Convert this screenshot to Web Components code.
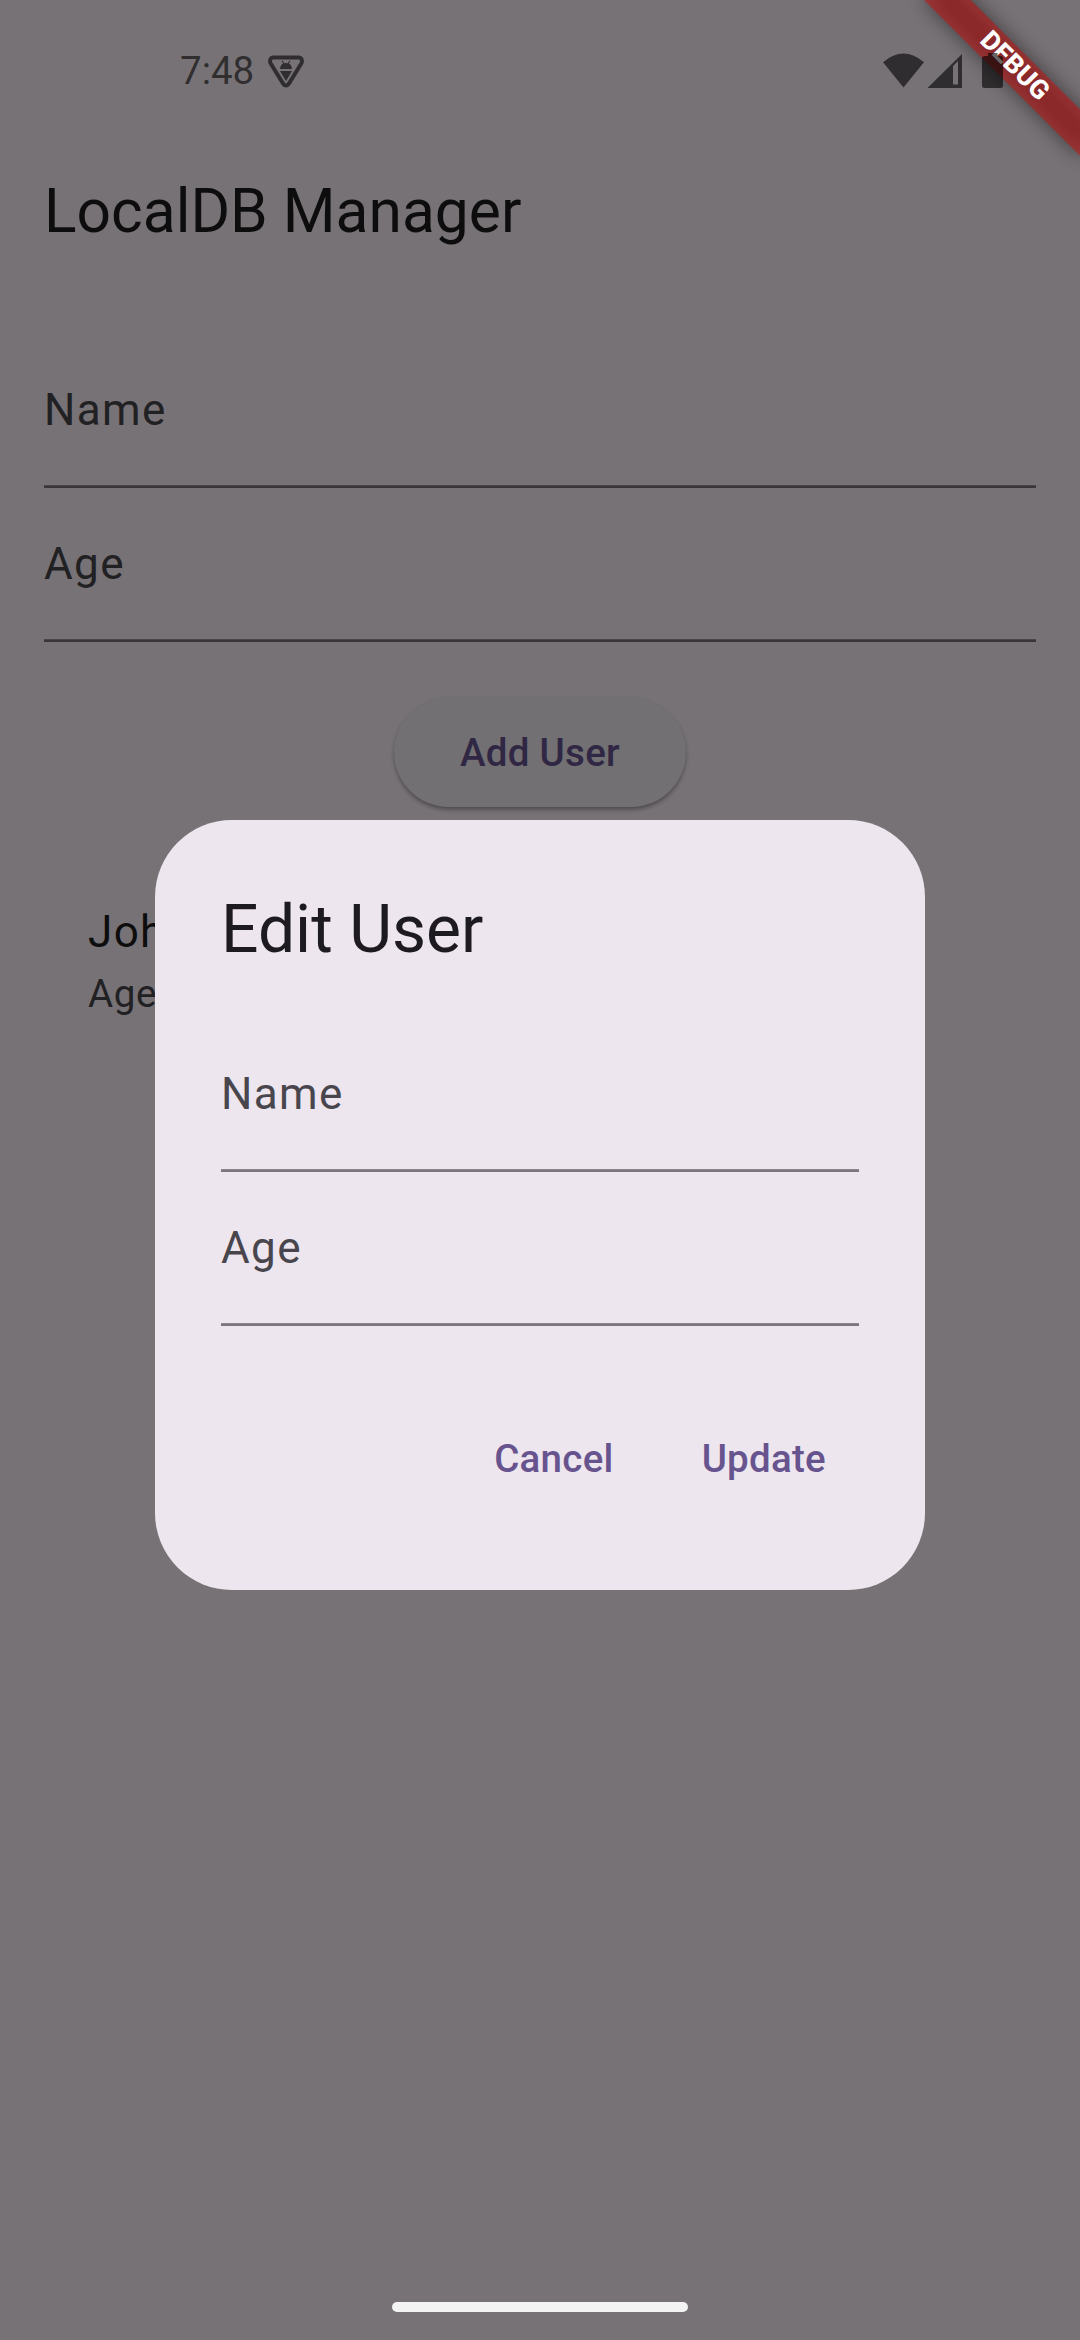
<!DOCTYPE html>
<html lang="en">
<head>
<meta charset="utf-8">
<title>LocalDB Manager</title>
<style>
html, body { margin: 0; padding: 0; width: 1080px; height: 2340px; overflow: hidden; background: #777276; font-family: Roboto, "Liberation Sans", sans-serif; }
</style>
</head>
<body>
<db-screen></db-screen>
<script>
const define = (name, html) => {
  const t = document.createElement('template');
  t.innerHTML = html;
  customElements.define(name, class extends HTMLElement {
    constructor() {
      super();
      this.attachShadow({ mode: 'open' }).appendChild(t.content.cloneNode(true));
    }
  });
};

define('status-bar', `
<style>
:host { display: flex; align-items: center; box-sizing: border-box; height: 136px; padding: 5px 77px 0 180px; color: rgba(0,0,0,.6); }
time { font-size: 38.5px; line-height: 46px; }
svg { display: block; fill: currentColor; }
.shield { margin: 3px auto 0 13px; }
.icons { display: flex; }
</style>
<time>7:48</time>
<svg class="shield" width="38" height="36" viewBox="0 0 38 36">
  <path fill="none" stroke="currentColor" stroke-width="4" stroke-linejoin="round" d="M6 3.4H32Q36 4.4 34.6 9L22 29.5Q19 33.5 16 29.5L3.4 9Q2 4.4 6 3.4Z"/>
  <path d="M13 14.9Q13.4 10.8 16.2 9.6L14.6 7.2L15.5 6.6L17.2 9.2Q19 8.6 20.8 9.2L22.5 6.6L23.4 7.2L21.8 9.6Q24.6 10.8 25 14.9ZM13 17H25L19 27Z"/>
</svg>
<div class="icons">
<svg width="120" height="36" viewBox="883 53 120 36">
  <path d="M883 62.2Q903.5 44.8 924 62.2L903.5 87.5Z"/>
  <path fill-rule="evenodd" d="M962 54V88H927.5ZM953 66V84.500H958V61Z"/>
  <path d="M988 53H997.500V56H1000.500Q1003 56 1003 58.500V85.500Q1003 88 1000.500 88H984.500Q982 88 982 85.500V58.500Q982 56 984.500 56H988Z"/>
</svg>
</div>`);

define('app-bar', `
<style>
:host { display: flex; align-items: center; box-sizing: border-box; height: 154px; padding: 0 44px 3px; font-size: 60.5px; line-height: 77px; color: #0d0d0e; }
</style>
<slot></slot>`);

define('text-field', `
<style>
:host { display: block; box-sizing: border-box; height: 154px; font-size: 44px; line-height: 152px; letter-spacing: 1.375px; color: var(--label, #212023); 
  background: linear-gradient(var(--line-soft, #48464a), var(--line-soft, #48464a)) 0 151px / 100% 1px no-repeat, linear-gradient(var(--line, #39363b), var(--line, #39363b)) 0 152px / 100% 2px no-repeat; }
</style>
<slot></slot>`);

define('raised-button', `
<style>
:host { display: flex; align-items: center; justify-content: center; align-self: center; width: 292px; height: 110px; border-radius: 55px; background: #727073; color: #302744; font-size: 38.5px; font-weight: 500; letter-spacing: .275px;
  box-shadow: 0 3px 4px -1px rgba(0,0,0,.28), 0 3px 4px rgba(0,0,0,.12); }
</style>
<slot></slot>`);

define('user-tile', `
<style>
:host { display: block; padding: 0 44px; }
.name { font-size: 44px; line-height: 66px; letter-spacing: 1.375px; color: #0d0d0e; }
.age { margin-top: 1px; font-size: 38.5px; line-height: 55px; letter-spacing: .69px; color: #212023; }
</style>
<div class="name"><slot></slot></div>
<div class="age"><slot name="age"></slot></div>`);

define('text-button', `
<style>
:host { display: flex; align-items: center; height: 110px; padding: 0 33px; font-size: 38.5px; font-weight: 500; letter-spacing: .275px; color: #67548e; }
</style>
<slot></slot>`);

define('edit-dialog', `
<style>
:host { display: flex; flex-direction: column; box-sizing: border-box; width: 770px; height: 770px; padding: 66px; border-radius: 77px; background: #ede6ee;
  --label: #48454d; --line: #7a757f; --line-soft: #8c8791; }
h2 { margin: 0 0 44px; font-size: 66px; line-height: 88px; font-weight: 400; color: #1d1b20; }
.actions { display: flex; justify-content: flex-end; align-items: center; gap: 22px; height: 132px; margin-top: 66px; }
</style>
<h2>Edit User</h2>
<text-field>Name</text-field>
<text-field>Age</text-field>
<div class="actions"><text-button>Cancel</text-button><text-button>Update</text-button></div>`);

define('debug-banner', `
<style>
:host { display: block; width: 220px; height: 33px; transform: rotate(45deg); }
.shadow, .band { position: absolute; inset: 0; }
.shadow { background: rgba(0,0,0,.5); filter: blur(10px); }
.band { display: flex; align-items: center; justify-content: center; box-sizing: border-box; padding-bottom: 3px; background: rgba(183,28,28,.627); color: #fff; font-size: 26.6px; line-height: 28px; font-weight: 800; }
</style>
<div class="shadow"></div>
<div class="band">DEBUG</div>`);

define('db-screen', `
<style>
:host { display: flex; flex-direction: column; position: relative; width: 1080px; height: 2340px; overflow: hidden; }
status-bar { position: relative; z-index: 2; }
main { display: flex; flex-direction: column; padding: 44px; }
raised-button { margin: 55px 0 92px; }
.home { width: 296px; height: 10px; border-radius: 5px; background: #f3f3f3; margin: auto auto 28px; }
.modal { position: absolute; inset: 820px 0 auto; display: flex; justify-content: center; }
/* Centre of the band sits 93.5px from the top right corner, along the diagonal. */
debug-banner { position: absolute; z-index: 1; top: 49.6px; left: 903.9px; }
</style>
<status-bar></status-bar>
<app-bar>LocalDB Manager</app-bar>
<main>
  <text-field>Name</text-field>
  <text-field>Age</text-field>
  <raised-button>Add User</raised-button>
  <user-tile>John<span slot="age">Age</span></user-tile>
</main>
<div class="home"></div>
<div class="modal"><edit-dialog></edit-dialog></div>
<debug-banner></debug-banner>`);
</script>
</body>
</html>
